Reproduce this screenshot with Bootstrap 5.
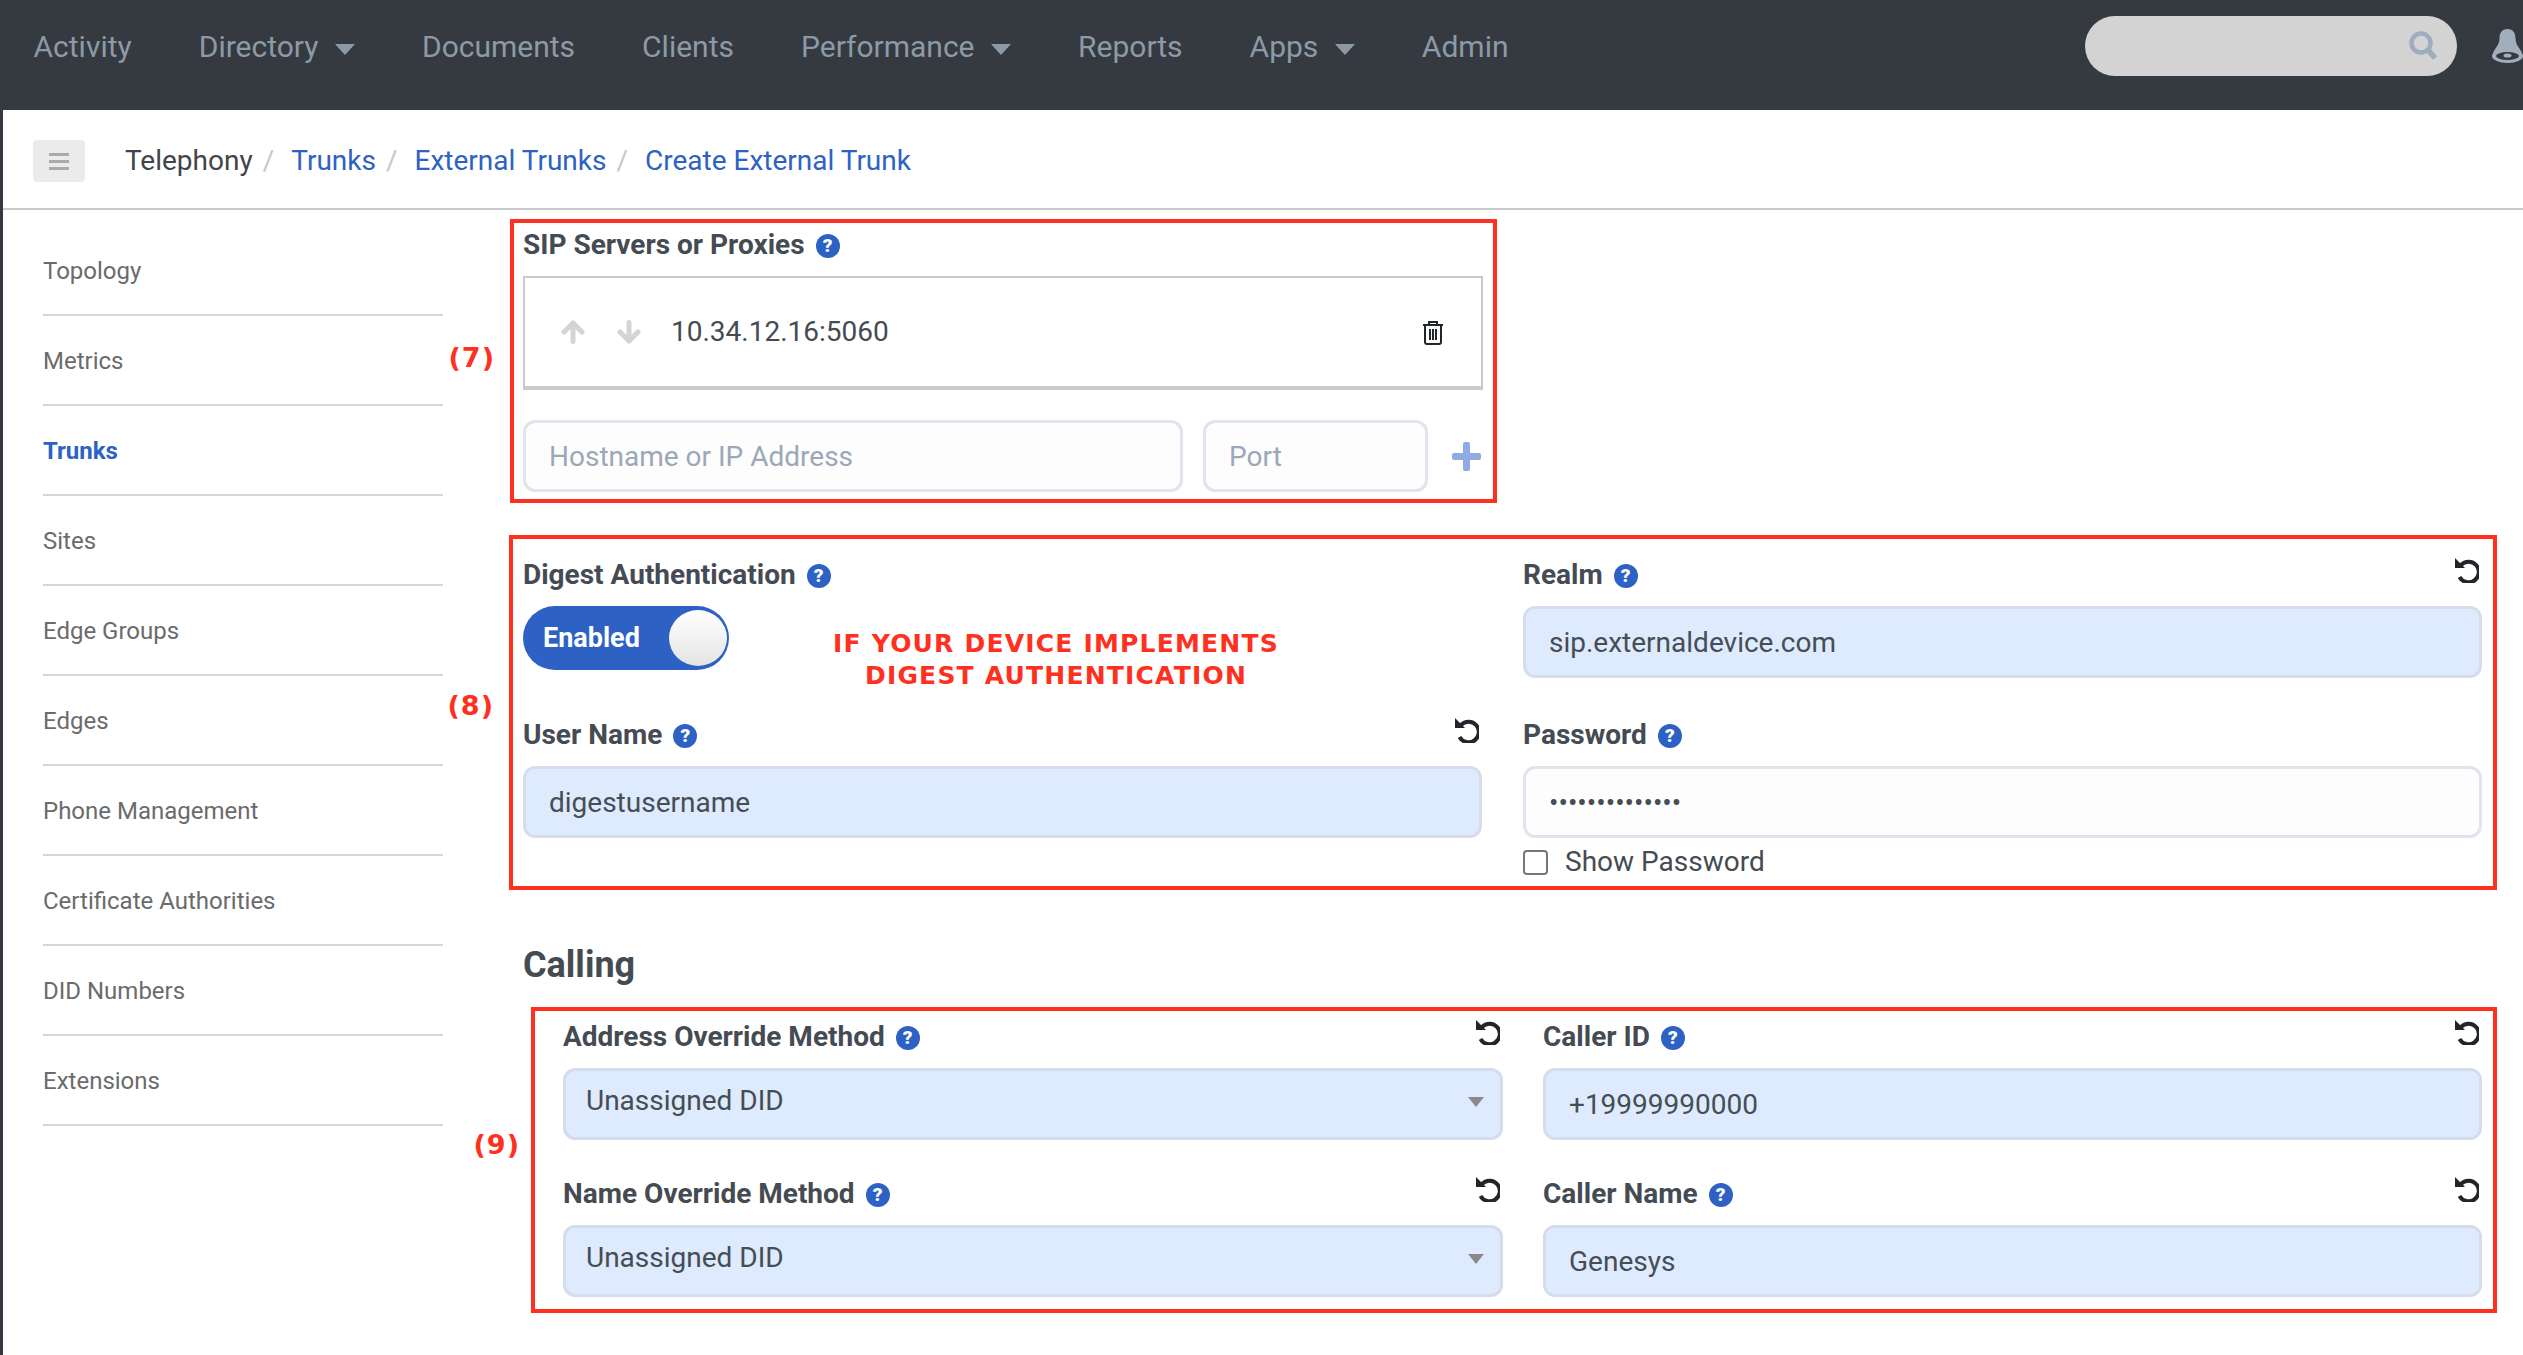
<!DOCTYPE html>
<html lang="en">
<head>
    <meta charset="UTF-8">
    <title>Create External Trunk</title>
    <link href="https://cdn.jsdelivr.net/npm/bootstrap@5.3.0/dist/css/bootstrap.min.css" rel="stylesheet">
    <style>
        body { font-family: Roboto, "Liberation Sans", sans-serif; color: #454b52; background: #fff; overflow: hidden; }
        .top-bar { height: 110px; background: #343a3f; padding: 0 0 18px; }
        .top-bar .nav { margin-top: 2px; }
        .top-bar .nav-link { font-size: 30px; line-height: 36px; color: #8c9aa8; padding: 0 33.5px; }
        .top-bar .dropdown-toggle::after { border-top-width: 11px; border-left-width: 10px; border-right-width: 10px; border-bottom: 0; margin-left: 16.5px; vertical-align: 2px; }
        .search-pill { width: 372px; height: 60px; border-radius: 30px; background: #d3d3d3; margin-right: 35px; padding-right: 19px; }
        .page-wrap { border-left: 3px solid #343a3f; min-height: 1245px; }
        .crumb-bar { height: 100px; border-bottom: 2px solid #cacaca; padding: 30px 30px 0; }
        .menu-btn { width: 52px; height: 42px; background: #ebebeb; border-radius: 4px; margin-right: 40px; }
        .menu-btn span { width: 20px; height: 3px; background: #aaa; }
        .breadcrumb { font-size: 28px; line-height: 40px; margin: 1px 0 0; }
        .breadcrumb a { color: #2d62c4; text-decoration: none; }
        .breadcrumb-item.active { color: #3f454b; }
        .breadcrumb-item + .breadcrumb-item { padding-left: 10px; }
        .breadcrumb-item + .breadcrumb-item::before { color: #c8c8c8; padding-right: 17px; }
        .side-menu { width: 400px; margin-left: 40px; margin-right: 66px; padding-top: 16px; flex-shrink: 0; }
        .side-menu a { display: block; height: 90px; line-height: 90px; font-size: 24px; color: #6b6b6b; text-decoration: none; border-bottom: 2px solid #d6d6d6; }
        .side-menu a.current { color: #2d62c4; font-weight: 700; }
        .form-col { padding-top: 9px; width: 1988px; }
        .red-box { border: 4px solid #ff3020; position: relative; }
        .box-sip { width: 987px; margin-left: 1px; padding: 4px 10px 7px 9px; margin-bottom: 32px; }
        .box-auth { padding: 18px 11px 0 10px; height: 355px; }
        .box-call { margin-left: 22px; padding: 8px 11px 12px 28px; }
        .two-col { display: grid; grid-template-columns: 1fr 1fr; column-gap: 41px; }
        .box-call .two-col { grid-template-columns: 940px 939px; column-gap: 40px; }
        .field-label { font-size: 28px; line-height: 35px; font-weight: 700; color: #454b52; margin-bottom: 15px; height: 34px; }
        .help-dot { display: inline-block; width: 24px; height: 24px; line-height: 24px; border-radius: 50%; background: #2d62c4; color: #fff; font-size: 19px; font-weight: 900; text-align: center; margin-left: 4px; vertical-align: 2px; }
        .reset-ico { width: 24px; height: 26px; margin-right: 3px; color: #22262a; }
        .form-control.fld, .form-select.fld { height: 72px; font-size: 28px; color: #474d54; border: 3px solid #e0e4ec; border-radius: 12px; padding: 0 23px; background-color: #fdfdfd; box-shadow: none; }
        .form-control.fld.filled, .form-select.fld { background-color: #deeafd; border-color: #d5dcea; }
        .form-control.fld::placeholder { color: #9aa8b8; }
        .form-select.fld { padding: 0 20px 6px; background-image: none; }
        .pick-wrap { position: relative; }
        .pick-wrap::after { content: ""; position: absolute; right: 19px; top: 29px; border-top: 10px solid #8a8a8a; border-left: 8px solid transparent; border-right: 8px solid transparent; }
        .row-gap-a { margin-top: 39px; }
        .row-gap-b { margin-top: 36px; }
        .sip-list { height: 114px; border: 2px solid #cacaca; border-bottom-width: 4px; margin: 15px 0 30px; padding: 0 37px 0 36px; font-size: 28px; color: #454b52; }
        .sip-list .addr { margin-left: 30px; }
        .arrow-gap { margin-left: 32px; }
        .add-row { gap: 20px; }
        .host-in { width: 660px !important; }
        .port-in { width: 225px !important; }
        .auth-top { height: 72px; }
        .en-toggle { width: 206px; height: 64px; border-radius: 32px; background: #2d62c4; color: #fff; font-size: 27px; font-weight: 700; padding: 0 2px 0 20px; }
        .en-knob { width: 58px; height: 56px; border-radius: 50%; background: linear-gradient(#fff, #e4e4e4); }
        .note-text { color: #ff3020; font-family: "DejaVu Sans", sans-serif; font-weight: 700; font-size: 25px; line-height: 32px; text-align: center; letter-spacing: 1.2px; width: 560px; margin-left: 47px; padding-top: 22px; }
        .mark-num { position: absolute; right: 100%; margin-right: 19px; color: #ff3020; font-family: "DejaVu Sans", sans-serif; font-weight: 700; font-size: 27px; letter-spacing: 1px; line-height: 34px; white-space: nowrap; }
        .box-call .mark-num { margin-right: 15px; }
        .show-row { margin-top: 8px; font-size: 28px; line-height: 32px; }
        .show-row .form-check-input { width: 25px; height: 25px; margin: 4px 17px 0 0; border: 2px solid #777; border-radius: 4px; }
        .sec-title { font-size: 36px; line-height: 44px; font-weight: 700; color: #454b52; margin: 53px 0 20px 14px; }
    </style>
</head>
<body>
<svg class="d-none">
    <symbol id="reset" viewBox="0 0 24 26">
        <path d="M6 8A10.3 10.3 0 1 1 4.5 20" fill="none" stroke="currentColor" stroke-width="4"/>
        <path d="M0 1v10h10z" fill="currentColor"/>
    </symbol>
</svg>
<nav class="navbar top-bar d-flex justify-content-between align-items-center flex-nowrap">
    <ul class="nav flex-nowrap">
        <li class="nav-item"><a class="nav-link" href="#">Activity</a></li>
        <li class="nav-item"><a class="nav-link dropdown-toggle" href="#">Directory</a></li>
        <li class="nav-item"><a class="nav-link" href="#">Documents</a></li>
        <li class="nav-item"><a class="nav-link" href="#">Clients</a></li>
        <li class="nav-item"><a class="nav-link dropdown-toggle" href="#">Performance</a></li>
        <li class="nav-item"><a class="nav-link" href="#">Reports</a></li>
        <li class="nav-item"><a class="nav-link dropdown-toggle" href="#">Apps</a></li>
        <li class="nav-item"><a class="nav-link" href="#">Admin</a></li>
    </ul>
    <div class="d-flex align-items-center">
        <div class="search-pill d-flex align-items-center justify-content-end">
            <svg width="29" height="30" viewBox="0 0 29 30" fill="none" stroke="#9dadbe"><circle cx="12" cy="12" r="9.5" stroke-width="4.5"/><path d="M19 19l7 8" stroke-width="5.5"/></svg>
        </div>
        <svg width="31" height="34" viewBox="0 0 31 34">
            <path d="M15.5 0C10 0 7.5 4 7.5 9.500C7.500 16 3 19 1 24H30C28 19 23.500 16 23.500 9.500C23.500 4 21 0 15.500 0Z" fill="#a0aebd"/>
            <ellipse cx="15.5" cy="27" rx="15.5" ry="7" fill="#a0aebd"/>
            <ellipse cx="15.5" cy="27" rx="11.500" ry="4" fill="#343a3f"/>
            <ellipse cx="15.5" cy="26.500" rx="4" ry="2" fill="#a0aebd"/>
        </svg>
    </div>
</nav>

<div class="page-wrap">
    <div class="crumb-bar d-flex align-items-start">
        <button class="menu-btn btn p-0 d-flex flex-column align-items-center justify-content-center gap-1 border-0" type="button"><span></span><span></span><span></span></button>
        <ol class="breadcrumb">
            <li class="breadcrumb-item active">Telephony</li>
            <li class="breadcrumb-item"><a href="#">Trunks</a></li>
            <li class="breadcrumb-item"><a href="#">External Trunks</a></li>
            <li class="breadcrumb-item"><a href="#">Create External Trunk</a></li>
        </ol>
    </div>

    <div class="d-flex">
        <div class="side-menu">
            <a href="#">Topology</a>
            <a href="#">Metrics</a>
            <a href="#" class="current">Trunks</a>
            <a href="#">Sites</a>
            <a href="#">Edge Groups</a>
            <a href="#">Edges</a>
            <a href="#">Phone Management</a>
            <a href="#">Certificate Authorities</a>
            <a href="#">DID Numbers</a>
            <a href="#">Extensions</a>
        </div>

        <div class="form-col">
            <section class="red-box box-sip">
                <span class="mark-num" style="top:118px">(7)</span>
                <div class="field-label m-0">SIP Servers or Proxies <span class="help-dot">?</span></div>
                <div class="sip-list d-flex align-items-center">
                    <svg width="24" height="24" viewBox="0 0 24 24" fill="none" stroke="#d4d4d4" stroke-width="5" stroke-linecap="round" stroke-linejoin="round"><path d="M12 21.500V4M3 12l9-9 9 9"/></svg>
                    <svg class="arrow-gap" width="24" height="24" viewBox="0 0 24 24" fill="none" stroke="#d4d4d4" stroke-width="5" stroke-linecap="round" stroke-linejoin="round"><path d="M12 2.500V20M3 12l9 9 9-9"/></svg>
                    <span class="addr">10.34.12.16:5060</span>
                    <svg class="ms-auto" width="22" height="25" viewBox="0 0 22 25" fill="none" stroke="#22262a" stroke-width="2"><path d="M1 5h20M7 5V2h8v3M3 5v17q0 2 2 2h12q2 0 2-2V5M8 9v11M11 9v11M14 9v11"/></svg>
                </div>
                <div class="d-flex align-items-center add-row">
                    <input class="form-control fld host-in" type="text" placeholder="Hostname or IP Address">
                    <input class="form-control fld port-in" type="text" placeholder="Port">
                    <svg class="ms-1" width="29" height="29" viewBox="0 0 29 29" fill="#8fabe2"><path d="M11 2q0-2 2-2h3q2 0 2 2v9h9q2 0 2 2v3q0 2-2 2h-9v9q0 2-2 2h-3q-2 0-2-2v-9H2q-2 0-2-2v-3q0-2 2-2h9z"/></svg>
                </div>
            </section>

            <section class="red-box box-auth">
                <span class="mark-num" style="top:150px">(8)</span>
                <div class="two-col">
                    <div>
                        <div class="field-label">Digest Authentication <span class="help-dot">?</span></div>
                        <div class="d-flex auth-top">
                            <div class="en-toggle d-flex align-items-center justify-content-between flex-shrink-0">Enabled<span class="en-knob"></span></div>
                            <div class="note-text">IF YOUR DEVICE IMPLEMENTS<br>DIGEST AUTHENTICATION</div>
                        </div>
                    </div>
                    <div>
                        <div class="field-label d-flex justify-content-between align-items-start"><span>Realm <span class="help-dot">?</span></span><svg class="reset-ico"><use href="#reset"/></svg></div>
                        <input class="form-control fld filled" type="text" value="sip.externaldevice.com">
                    </div>
                    <div class="row-gap-a">
                        <div class="field-label d-flex justify-content-between align-items-start"><span>User Name <span class="help-dot">?</span></span><svg class="reset-ico"><use href="#reset"/></svg></div>
                        <input class="form-control fld filled" type="text" value="digestusername">
                    </div>
                    <div class="row-gap-a">
                        <div class="field-label">Password <span class="help-dot">?</span></div>
                        <input class="form-control fld" type="password" value="passwordpasswo">
                        <div class="show-row d-flex align-items-start">
                            <input class="form-check-input" type="checkbox" id="showPass">
                            <label for="showPass">Show Password</label>
                        </div>
                    </div>
                </div>
            </section>

            <h2 class="sec-title">Calling</h2>

            <section class="red-box box-call">
                <span class="mark-num" style="top:117px">(9)</span>
                <div class="two-col">
                    <div>
                        <div class="field-label d-flex justify-content-between align-items-start"><span>Address Override Method <span class="help-dot">?</span></span><svg class="reset-ico"><use href="#reset"/></svg></div>
                        <div class="pick-wrap"><select class="form-select fld"><option>Unassigned DID</option></select></div>
                    </div>
                    <div>
                        <div class="field-label d-flex justify-content-between align-items-start"><span>Caller ID <span class="help-dot">?</span></span><svg class="reset-ico"><use href="#reset"/></svg></div>
                        <input class="form-control fld filled" type="text" value="+19999990000">
                    </div>
                    <div class="row-gap-b">
                        <div class="field-label d-flex justify-content-between align-items-start"><span>Name Override Method <span class="help-dot">?</span></span><svg class="reset-ico"><use href="#reset"/></svg></div>
                        <div class="pick-wrap"><select class="form-select fld"><option>Unassigned DID</option></select></div>
                    </div>
                    <div class="row-gap-b">
                        <div class="field-label d-flex justify-content-between align-items-start"><span>Caller Name <span class="help-dot">?</span></span><svg class="reset-ico"><use href="#reset"/></svg></div>
                        <input class="form-control fld filled" type="text" value="Genesys">
                    </div>
                </div>
            </section>
        </div>
    </div>
</div>
<script src="https://cdn.jsdelivr.net/npm/bootstrap@5.3.0/dist/js/bootstrap.bundle.min.js"></script>
</body>
</html>
